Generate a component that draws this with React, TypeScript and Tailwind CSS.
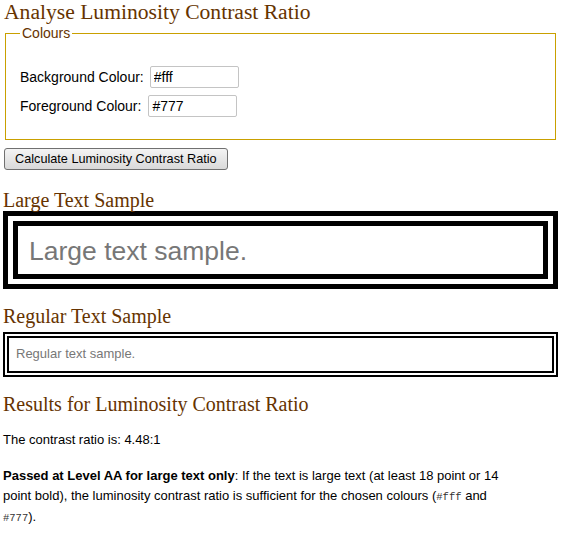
import React from "react";

export default function App() {
  const heading =
    "font-['Liberation_Serif','Times_New_Roman',serif] text-[20px] leading-[21px] font-normal text-[#663300]";

  return (
    <div className="min-h-screen bg-white pl-[3px] font-['Liberation_Sans',Arial,sans-serif] text-black">
      <h1 className="h-[25px] pl-[1px] font-['Liberation_Serif','Times_New_Roman',serif] text-[21.6px] leading-[25px] font-normal text-[#663300]">
        Analyse Luminosity Contrast Ratio
      </h1>

      <fieldset className="ml-[2px] w-[551px] border border-[#c9a000] px-[14px] pb-[22px]">
        <legend className="px-[2px] text-[14px] leading-[16px] text-[#663300]">
          Colours
        </legend>
        <div className="flex flex-col gap-[7px] pt-[25px] text-[14px]">
          <label className="flex h-[22px] items-center gap-[6px]">
            <span>Background Colour:</span>
            <input
              defaultValue="#fff"
              className="h-[22px] w-[89px] rounded-[2px] border border-[#c4c4c4] px-[3px] text-[14px] outline-none"
            />
          </label>
          <label className="flex h-[22px] items-center gap-[7px]">
            <span>Foreground Colour:</span>
            <input
              defaultValue="#777"
              className="h-[22px] w-[89px] rounded-[2px] border border-[#c4c4c4] px-[3px] text-[14px] outline-none"
            />
          </label>
        </div>
      </fieldset>

      <button className="mt-[8px] ml-[1px] block h-[22px] rounded-[3px] border border-[#707070] bg-linear-to-b from-[#f4f4f4] to-[#d9d9d9] px-[10px] text-[12.7px] leading-[20px] text-black">
        Calculate Luminosity Contrast Ratio
      </button>

      <h2 className={`mt-[20px] ${heading}`}>Large Text Sample</h2>
      <div className="w-[555px] border-[15px] border-double border-black pt-[10px] pb-[8px] pl-[11px] text-[26.5px] leading-[30px] text-[#777]">
        Large text sample.
      </div>

      <h2 className={`mt-[17px] ${heading}`}>Regular Text Sample</h2>
      <div className="mt-[5px] w-[555px] border-[6px] border-double border-black pt-[8px] pb-[10px] pl-[7px] text-[13px] leading-[15px] text-[#777]">
        Regular text sample.
      </div>

      <h2 className={`mt-[17px] ${heading}`}>
        Results for Luminosity Contrast Ratio
      </h2>
      <p className="mt-[15px] text-[13px] leading-[20.5px]">
        The contrast ratio is: 4.48:1
      </p>
      <p className="mt-[15px] max-w-[520px] text-[13px] leading-[20.5px]">
        <strong className="font-bold">Passed at Level AA for large text only</strong>
        : If the text is large text (at least 18 point or 14 point bold), the
        luminosity contrast ratio is sufficient for the chosen colours (
        <code className="font-['Liberation_Mono','Courier_New',monospace] text-[10.5px] leading-none text-[#333]">
          #fff
        </code>{" "}
        and{" "}
        <code className="font-['Liberation_Mono','Courier_New',monospace] text-[10.5px] leading-none text-[#333]">
          #777
        </code>
        ).
      </p>
    </div>
  );
}
